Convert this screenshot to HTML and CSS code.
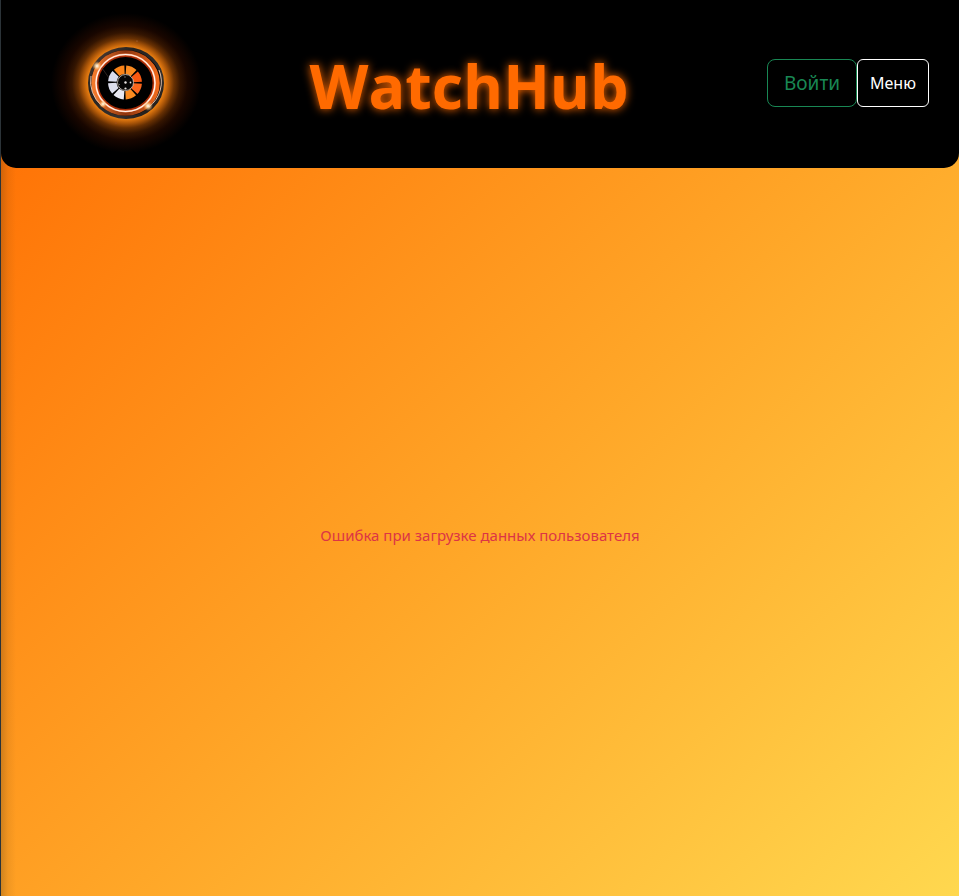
FILE: index.html
```html
<!DOCTYPE html>
<html lang="ru">
<head>
  <meta charset="utf-8">
  <meta name="viewport" content="width=device-width, initial-scale=1">
  <title>WatchHub</title>
  <link rel="stylesheet" href="styles.css">
</head>
<body>
  <header class="header">
    <a class="logo" href="#" aria-label="WatchHub">
      <svg class="logo-image" viewBox="11 0 150 150" aria-hidden="true">
        <defs>
          <radialGradient id="halo">
            <stop offset="0" stop-color="#ff8c10"/>
            <stop offset=".49" stop-color="#f58a14"/>
            <stop offset=".53" stop-color="#d8720e"/>
            <stop offset=".58" stop-color="#a85408"/>
            <stop offset=".64" stop-color="#673003"/>
            <stop offset=".72" stop-color="#341501"/>
            <stop offset=".82" stop-color="#180600"/>
            <stop offset="1" stop-color="#000000"/>
          </radialGradient>
          <linearGradient id="rim" x1="0" y1="0" x2="1" y2="1">
            <stop offset="0" stop-color="#5a443a"/>
            <stop offset=".3" stop-color="#242220"/>
            <stop offset=".7" stop-color="#34302e"/>
            <stop offset="1" stop-color="#15100d"/>
          </linearGradient>
          <linearGradient id="band" x1="0" y1="0" x2="1" y2="0">
            <stop offset="0" stop-color="#f47a2c"/>
            <stop offset=".5" stop-color="#8c340e"/>
            <stop offset="1" stop-color="#f06a1c"/>
          </linearGradient>
          <radialGradient id="spark">
            <stop offset="0" stop-color="#ffffff"/>
            <stop offset=".4" stop-color="#ffd9a0" stop-opacity=".8"/>
            <stop offset="1" stop-color="#ff9a40" stop-opacity="0"/>
          </radialGradient>
        </defs>
        <ellipse cx="86" cy="73" rx="75" ry="70" fill="url(#halo)"/>
        <ellipse cx="86" cy="73" rx="36.500" ry="34.500" fill="#0c0806" stroke="url(#rim)" stroke-width="3"/>
        <ellipse cx="85.500" cy="73" rx="32" ry="30.500" fill="none" stroke="url(#band)" stroke-width="4.500"/>
        <path d="M51 66A35 33 0 0 0 62 96M119 60A35 33 0 0 1 109 97" fill="none" stroke="#e0c0ac" stroke-width="1"/>
        <ellipse cx="85.500" cy="73" rx="28" ry="27" fill="#000" stroke="#a72c06" stroke-width="2"/>
        <ellipse cx="85.500" cy="73" rx="29.500" ry="28.500" fill="none" stroke="#ff9b6c" stroke-width="2"/>
        <ellipse cx="85.500" cy="73" rx="29.500" ry="28.500" fill="none" stroke="#fff6f0" stroke-width="1.200"/>
        <g fill="none" stroke-width="8.500" stroke-dasharray="8.400 200" stroke-dashoffset="-1">
          <circle cx="85" cy="72.500" r="12.700" stroke="#fa661c"/>
          <circle cx="85" cy="72.500" r="12.700" stroke="#fa8a20" transform="rotate(45 85 72.500)"/>
          <circle cx="85" cy="72.500" r="12.700" stroke="#e8e8f2" transform="rotate(90 85 72.500)"/>
          <circle cx="85" cy="72.500" r="12.700" stroke="#dcdeed" transform="rotate(135 85 72.500)"/>
          <circle cx="85" cy="72.500" r="12.700" stroke="#d8dbed" transform="rotate(180 85 72.500)"/>
          <circle cx="85" cy="72.500" r="12.700" stroke="#f98318" transform="rotate(225 85 72.500)"/>
          <circle cx="85" cy="72.500" r="12.700" stroke="#f98a20" transform="rotate(270 85 72.500)"/>
          <circle cx="85" cy="72.500" r="12.700" stroke="#f85912" transform="rotate(315 85 72.500)"/>
        </g>
        <circle cx="85.500" cy="72.500" r="8" fill="#050505" stroke="#d9cfc8" stroke-width=".8"/>
        <g fill="#e8e4e2">
          <circle cx="85.500" cy="72.500" r="1.200"/>
          <circle cx="90.500" cy="72.500" r=".9"/>
          <circle cx="85.500" cy="78.500" r="1.100"/>
          <circle cx="85" cy="67" r=".7" opacity=".6"/>
          <circle cx="79.500" cy="74.500" r=".5" opacity=".6"/>
        </g>
        <path d="M62 58L69 68" stroke="#4a3c38" stroke-width="1" opacity=".6"/>
        <circle cx="57" cy="56" r="5" fill="url(#spark)"/>
        <circle cx="63" cy="94" r="4" fill="url(#spark)"/>
        <circle cx="108" cy="96" r="5" fill="url(#spark)"/>
        <circle cx="97" cy="31" r=".6" fill="#b87050"/>
        <circle cx="76" cy="113" r=".6" fill="#a05030"/>
      </svg>
    </a>
    <h1 class="title">WatchHub</h1>
    <div class="actions">
      <button class="button button-login" type="button">Войти</button>
      <button class="button button-menu" type="button">Меню</button>
    </div>
  </header>
  <main class="content">
    <p class="error" role="alert">Ошибка при загрузке данных пользователя</p>
  </main>
</body>
</html>
```

FILE: styles.css
```css
* {
  box-sizing: border-box;
}

body {
  display: flex;
  flex-direction: column;
  min-height: 100vh;
  margin: 0;
  border-left: 1px solid #2b3338;
  background:
    linear-gradient(90deg, rgba(70, 50, 20, 0.28), rgba(70, 50, 20, 0.08) 8px, transparent 16px),
    linear-gradient(135deg, #ff6a00, #ffa728 55%, #ffd84f);
  font-family: "Noto Sans", "Open Sans", sans-serif;
  font-size: 15px;
  line-height: 24px;
}

.header {
  display: flex;
  align-items: center;
  justify-content: space-between;
  padding: 8px 30px;
  border-radius: 0 0 15px 15px;
  background: #000;
}

.logo {
  display: block;
  margin: 0 -30px 0 20px;
  padding-top: 2px;
}

.logo-image {
  display: block;
  width: 150px;
  height: 150px;
}

.title {
  margin: 0;
  padding-top: 4px;
  color: #ff6a00;
  font-family: "Open Sans", "Noto Sans", sans-serif;
  font-size: 61px;
  font-weight: 700;
  line-height: 76px;
  text-shadow: 0 0 10px #ff6a00;
}

.actions {
  display: flex;
  padding-bottom: 2px;
}

.button {
  height: 48px;
  border: 1px solid;
  background: transparent;
  font-family: inherit;
  cursor: pointer;
}

.button-login {
  padding: 0 16px;
  border-radius: 8px;
  color: #198754;
  font-size: 19px;
}

.button-menu {
  padding: 0 12px;
  border-radius: 6px;
  color: #fff;
  font-size: 16px;
}

.content {
  display: flex;
  flex: 1;
  align-items: center;
  justify-content: center;
  padding: 6px 16px 0;
}

.error {
  margin: 0;
  color: #dc3545;
}
```
